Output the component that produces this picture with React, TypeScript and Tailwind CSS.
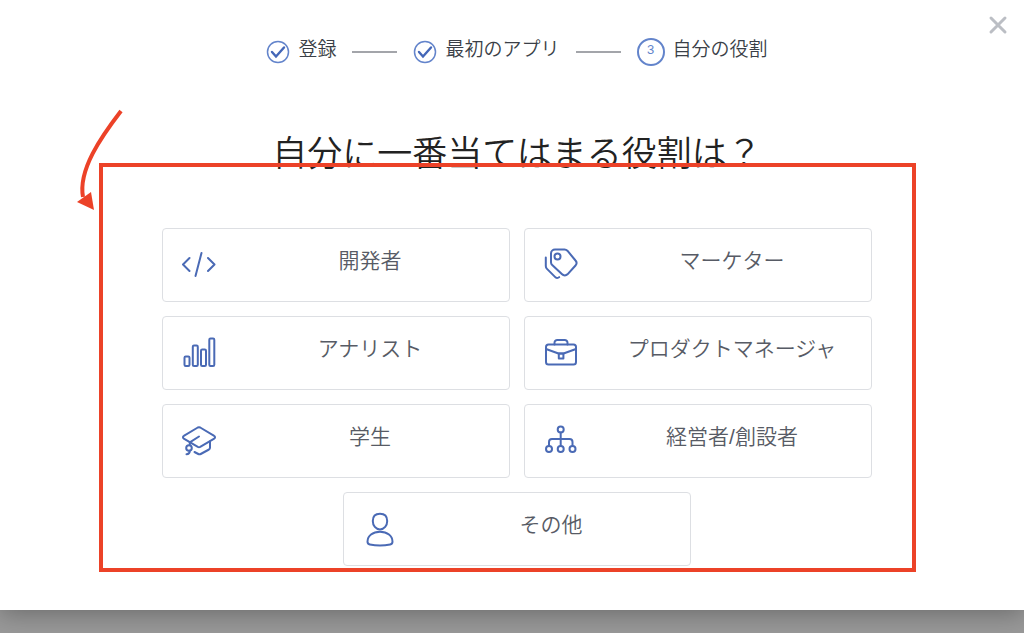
import type { ReactNode } from "react";

const steps = [
  { label: "登録", done: true },
  { label: "最初のアプリ", done: true },
  { label: "自分の役割", done: false },
];

const roles: { label: string; icon: ReactNode }[] = [
  {
    label: "開発者",
    icon: <path d="M10.5 13 4 19.5l6.5 6.5M29 13l6.5 6.5L29 26M22.500 8l-6 23" />,
  },
  {
    label: "マーケター",
    icon: (
      <>
        <path d="M14 4.500h9.500a4 4 0 0 1 2.900 1.200L34.500 15.500a3.800 3.800 0 0 1 0 5L26.500 29.300a3.800 3.800 0 0 1-5.400 0L11.200 20a4 4 0 0 1-1.200-2.900V8.500a4 4 0 0 1 4-4Z" />
        <circle cx="16.500" cy="11.500" r="3" />
        <path d="M4.800 12.500V21a4 4 0 0 0 1.200 2.900l8 8a2.800 2.800 0 0 0 4.200.2" />
      </>
    ),
  },
  {
    label: "アナリスト",
    icon: (
      <>
        <rect x="5.500" y="23.500" width="5" height="9.500" rx="1.200" />
        <rect x="13.800" y="12.500" width="5" height="20.500" rx="1.200" />
        <rect x="22" y="16.500" width="5" height="16.500" rx="1.200" />
        <rect x="30.300" y="5.500" width="5" height="27.500" rx="1.200" />
      </>
    ),
  },
  {
    label: "プロダクトマネージャ",
    icon: (
      <>
        <rect x="5" y="11.500" width="30" height="20" rx="2.500" />
        <path d="M13.500 11.500V9.800A2.800 2.800 0 0 1 16.300 7h7.400A2.800 2.800 0 0 1 26.500 9.800v1.700M5 16l12.500 4.500h5L35 16" />
        <path d="M17.800 20.500h4.600v5h-4.600z" />
      </>
    ),
  },
  {
    label: "学生",
    icon: (
      <>
        <path d="M18.800 6.500a2.500 2.500 0 0 1 2.400 0l14 8.300a1.600 1.600 0 0 1 0 2.800l-14 8.300a2.500 2.500 0 0 1-2.400 0l-14-8.300a1.600 1.600 0 0 1 0-2.800z" />
        <path d="M20 15.500 10.800 21.300V24" />
        <circle cx="10" cy="27" r="2.800" />
        <path d="M10.800 29.800c0 2.200-1 3.400-3.300 3.400M31 20.500v6.300a2 2 0 0 1-1 1.700l-8.300 4.500a2.500 2.500 0 0 1-2.400 0L15.500 31" />
      </>
    ),
  },
  {
    label: "経営者/創設者",
    icon: (
      <>
        <circle cx="19.700" cy="8.500" r="3" />
        <circle cx="8" cy="28" r="3" />
        <circle cx="19.700" cy="28" r="3" />
        <circle cx="31.500" cy="28" r="3" />
        <path d="M19.700 11.500V25M8 25v-4a3 3 0 0 1 3-3h17.500a3 3 0 0 1 3 3v4" />
      </>
    ),
  },
  {
    label: "その他",
    icon: (
      <>
        <path d="M20 4.700c4.700 0 7.200 3 7.200 7.300 0 4.600-3 8.500-7.200 8.500s-7.200-3.900-7.200-8.500c0-4.300 2.500-7.300 7.200-7.300Z" />
        <path d="M20 22.800c7.300 0 12.500 4 12.500 10 0 1.500-.8 2.300-2.300 2.600-6 1.200-14.400 1.200-20.400 0-1.500-.3-2.300-1.100-2.300-2.600 0-6 5.200-10 12.500-10Z" />
      </>
    ),
  },
];

function StepMark({ done, number }: { done: boolean; number: number }) {
  if (!done) {
    return (
      <span className="grid size-7 place-items-center rounded-full border-2 border-[#6384cb] pb-1 text-[13px] leading-4 text-[#6384cb]">
        {number}
      </span>
    );
  }
  return (
    <svg viewBox="0 0 24 24" className="size-6" fill="none" aria-hidden="true">
      <circle cx="12" cy="12" r="10.500" stroke="#6384cb" strokeWidth="1.500" />
      <path d="m6 12 4 4.500 8-9" stroke="#4467b8" strokeWidth="2.400" strokeLinecap="round" />
    </svg>
  );
}

function Steps() {
  return (
    <ol className="flex items-center justify-center gap-4 text-[19px] leading-7 font-[350] text-[#3a3f47]">
      {steps.map((step, i) => (
        <li key={step.label} className="flex items-center gap-4">
          {i > 0 && <span className="h-0.5 w-[45px] bg-[#a3a5aa]" />}
          <span className="flex items-center gap-2">
            <StepMark done={step.done} number={i + 1} />
            <span className="pb-1">{step.label}</span>
          </span>
        </li>
      ))}
    </ol>
  );
}

/** Red frame and arrow that point the reader at the role buttons. */
function Callout() {
  return (
    <div className="pointer-events-none absolute -top-[65px] -right-11 -bottom-1.5 -left-[63px] border-4 border-[#ec4228]">
      <svg
        viewBox="0 0 50 106"
        className="absolute -top-[59px] -left-[28px] h-[106px] w-[50px]"
        fill="none"
        aria-hidden="true"
      >
        <path d="M46 3C26 29 3 62 8 89" stroke="#ec4228" strokeWidth="4" />
        <path d="m2 94 14-10 3 18Z" fill="#ec4228" />
      </svg>
    </div>
  );
}

export default function App() {
  return (
    <div className="min-h-screen bg-[#999999] font-['Liberation_Sans','Noto_Sans_CJK_JP',sans-serif]">
      <main className="relative bg-white pt-9 pr-4 pb-11 pl-[26px] shadow-[0_4px_24px_rgba(0,0,0,0.3)]">
        <button
          type="button"
          aria-label="閉じる"
          className="absolute top-[15px] right-4 text-[#bbbec4]"
        >
          <svg viewBox="0 0 20 20" className="size-5" fill="none" aria-hidden="true">
            <path d="m3 3 14 14M17 3 3 17" stroke="currentColor" strokeWidth="3" strokeLinecap="round" />
          </svg>
        </button>

        <Steps />

        <h1 className="mt-[62px] text-center text-[35px] leading-[48px] font-[350] text-[#222222]">
          自分に一番当てはまる役割は？
        </h1>

        <div className="relative mx-auto mt-[50px] flex max-w-[710px] flex-wrap justify-center gap-3.5">
          {roles.map((role) => (
            <button
              key={role.label}
              type="button"
              className="flex h-[74px] w-[348px] items-center rounded border border-[#dddfe3] pl-4 text-[#575b65]"
            >
              <svg
                viewBox="0 0 40 40"
                className="size-10 shrink-0"
                fill="none"
                stroke="#4a6ab5"
                strokeWidth="2"
                strokeLinecap="round"
                strokeLinejoin="round"
                aria-hidden="true"
              >
                {role.icon}
              </svg>
              <span className="ml-3 flex-1 pb-2 text-center text-[21px] leading-7 font-[350]">
                {role.label}
              </span>
            </button>
          ))}
          <Callout />
        </div>
      </main>
    </div>
  );
}
